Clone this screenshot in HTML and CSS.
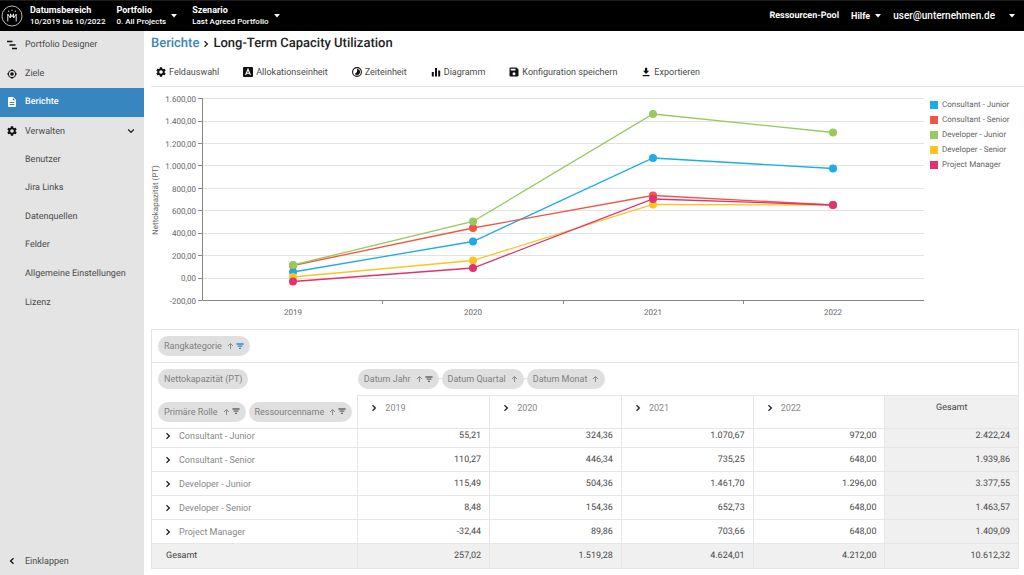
FILE: index.html
```html
<!DOCTYPE html>
<html lang="de">
<head>
<meta charset="utf-8">
<title>Long-Term Capacity Utilization</title>
<meta name="viewport" content="width=device-width, initial-scale=1">
<link rel="stylesheet" href="styles.css">
</head>
<body>
<svg class="defs" aria-hidden="true">
  <symbol id="gear" viewBox="2 2 20 20"><path d="M19.14 12.94c.04-.3.06-.61.06-.94 0-.32-.02-.64-.07-.94l2.03-1.58c.18-.14.23-.41.12-.61l-1.92-3.32c-.12-.22-.37-.29-.59-.22l-2.39.96c-.5-.38-1.03-.7-1.62-.94L14.4 2.81c-.04-.24-.24-.41-.48-.41h-3.84c-.24 0-.43.17-.47.41L9.25 5.35C8.66 5.59 8.12 5.92 7.63 6.29L5.24 5.33c-.22-.08-.47 0-.59.22L2.74 8.87c-.12.21-.08.47.12.61l2.03 1.58C4.84 11.36 4.8 11.69 4.8 12s.02.64.07.94l-2.03 1.58c-.18.14-.23.41-.12.61l1.92 3.32c.12.22.37.29.59.22l2.39-.96c.5.38 1.03.7 1.62.94l.36 2.54c.05.24.24.41.48.41h3.84c.24 0 .44-.17.47-.41l.36-2.54c.59-.24 1.13-.56 1.62-.94l2.39.96c.22.08.47 0 .59-.22l1.92-3.32c.12-.22.07-.47-.12-.61zM12 15.6a3.6 3.6 0 1 1 0-7.2 3.6 3.6 0 0 1 0 7.2z"/></symbol>
  <symbol id="chevron" viewBox="0 0 8 8"><path d="M2.5 1.2 5.4 4 2.5 6.8" fill="none" stroke="currentColor" stroke-width="1.3"/></symbol>
  <symbol id="caret" viewBox="0 0 6 4"><path d="M0 0h6L3 3.5z"/></symbol>
  <symbol id="up" viewBox="0 0 7 8"><path d="M3.5 7V1.6M1 4l2.500-2.500L6 4" fill="none" stroke="currentColor" stroke-width=".9"/></symbol>
  <symbol id="filter" viewBox="0 0 8 7"><path d="M.4 1h7.2M1.6 3.2h4.8M3 5.4h2" fill="none" stroke="currentColor" stroke-width="1.3"/></symbol>
</svg>

<header class="topbar">
  <svg class="logo" viewBox="0 0 22 22" role="img" aria-label="Logo"><circle cx="11" cy="11" r="10" fill="none" stroke="#ccc" stroke-width=".9"/><path d="M6.800 16.500V9.200l2.600 3.800V8.800l1.600 3.200 1.600-3.200V13l2.600-3.800v7.300" fill="none" stroke="#fff" stroke-width=".9"/><circle cx="7.700" cy="6.200" r=".7" fill="#bbb"/><circle cx="11" cy="5.300" r=".7" fill="#bbb"/><circle cx="14.300" cy="6.200" r=".7" fill="#bbb"/></svg>
  <button class="pick range"><span class="pick-text"><strong>Datumsbereich</strong><span>10/2019 bis 10/2022</span></span></button>
  <button class="pick"><span class="pick-text"><strong>Portfolio</strong><span>0. All Projects</span></span><svg class="caret"><use href="#caret"/></svg></button>
  <button class="pick"><span class="pick-text"><strong>Szenario</strong><span>Last Agreed Portfolio</span></span><svg class="caret"><use href="#caret"/></svg></button>
  <nav class="top-links">
    <a href="#">Ressourcen-Pool</a>
    <button>Hilfe<svg class="caret"><use href="#caret"/></svg></button>
    <button class="user">user@unternehmen.de<svg class="caret"><use href="#caret"/></svg></button>
  </nav>
</header>

<div class="layout">
  <aside class="sidebar">
    <nav class="menu">
      <a href="#"><svg class="icon" viewBox="0 0 10 10"><path d="M0 1.500h5.500M2.500 5h6M5 8.500h5" fill="none" stroke="currentColor" stroke-width="1.500"/></svg>Portfolio Designer</a>
      <a href="#"><svg class="icon" viewBox="0 0 10 10"><circle cx="5" cy="5" r="3.7" fill="none" stroke="currentColor"/><circle cx="5" cy="5" r="1.8"/><path d="M5 0v1.5M5 8.500V10M0 5h1.5M8.500 5H10" stroke="currentColor"/></svg>Ziele</a>
      <a href="#" class="active" aria-current="page"><svg class="icon" viewBox="0 0 10 10"><path fill-rule="evenodd" d="M2 0h4.200L9 2.800V9a1 1 0 0 1-1 1H2a1 1 0 0 1-1-1V1a1 1 0 0 1 1-1zM5.800.8v2.400h2.400zM2.800 5v.9h4.400V5zM2.800 7v.9h4.400V7z"/></svg>Berichte</a>
      <button><svg class="icon"><use href="#gear"/></svg>Verwalten<svg class="expand"><use href="#chevron"/></svg></button>
      <a href="#" class="sub">Benutzer</a>
      <a href="#" class="sub">Jira Links</a>
      <a href="#" class="sub">Datenquellen</a>
      <a href="#" class="sub">Felder</a>
      <a href="#" class="sub">Allgemeine Einstellungen</a>
      <a href="#" class="sub">Lizenz</a>
    </nav>
    <button class="collapse"><svg class="icon back"><use href="#chevron"/></svg>Einklappen</button>
  </aside>

  <main class="main">
    <h1 class="crumbs"><a href="#">Berichte</a><svg class="chev"><use href="#chevron"/></svg><span>Long-Term Capacity Utilization</span></h1>
    <div class="toolbar">
      <button><svg class="icon"><use href="#gear"/></svg>Feldauswahl</button>
      <button><svg class="icon" viewBox="0 0 10 10"><rect width="10" height="10" rx="1"/><path d="M2.600 8 5 2.200 7.400 8M3.500 6.200h3" fill="none" stroke="#fff" stroke-width="1.100"/></svg>Allokationseinheit</button>
      <button><svg class="icon" viewBox="0 0 10 10"><circle cx="5" cy="5" r="4.400" fill="none" stroke="currentColor" stroke-width="1.100"/><path d="M5 2a3 3 0 1 1-2.200 5L5 5z"/></svg>Zeiteinheit</button>
      <button><svg class="icon" viewBox="0 0 10 10"><path d="M.8 5h2v4.500h-2zM4 1h2v8.500H4zM7.200 3.500h2v6h-2z"/></svg>Diagramm</button>
      <button><svg class="icon" viewBox="0 0 10 10"><path fill-rule="evenodd" d="M1.500.5h6l2 2v6a1 1 0 0 1-1 1h-7a1 1 0 0 1-1-1v-7a1 1 0 0 1 1-1zM1.700 1.700v1.900h4.800V1.700zM5 5.200a1.500 1.500 0 1 0 0 3 1.500 1.500 0 0 0 0-3z"/></svg>Konfiguration speichern</button>
      <button><svg class="icon" viewBox="0 0 10 10"><path d="M4 .8h2.200v3h2L5.100 7 2 3.800h2zM1.700 8h6.800v1.300H1.700z"/></svg>Exportieren</button>
    </div>

    <section class="chart">
      <svg class="plot" viewBox="151 87 776 238" role="img" aria-label="Nettokapazität (PT) nach Jahr">
        <path class="grid" d="M203 98.500H924M203 121.500H924M203 143.500H924M203 165.500H924M203 188.500H924M203 210.500H924M203 233.500H924M203 255.500H924M203 278.500H924"/>
        <path class="axis" d="M202.500 98V300.500H924M198 98.500h4M198 121.500h4M198 143.500h4M198 165.500h4M198 188.500h4M198 210.500h4M198 233.500h4M198 255.500h4M198 278.500h4M198 300.500h4M382.500 300v4M563.500 300v4M743.500 300v4"/>
        <g class="y-labels">
          <text x="196" y="102">1.600,00</text><text x="196" y="124">1.400,00</text><text x="196" y="147">1.200,00</text><text x="196" y="169">1.000,00</text><text x="196" y="192">800,00</text><text x="196" y="214">600,00</text><text x="196" y="236">400,00</text><text x="196" y="259">200,00</text><text x="196" y="281">0,00</text><text x="196" y="304">-200,00</text>
        </g>
        <g class="x-labels">
          <text x="293" y="315">2019</text><text x="473" y="315">2020</text><text x="653" y="315">2021</text><text x="833" y="315">2022</text>
          <text transform="translate(158 200) rotate(-90)">Nettokapazität (PT)</text>
        </g>
        <g class="series blue"><polyline points="293,272 473,241.500 653,158 833,168.500"/><circle cx="293" cy="272" r="4"/><circle cx="473" cy="241.500" r="4"/><circle cx="653" cy="158" r="4"/><circle cx="833" cy="168.500" r="4"/></g>
        <g class="series red"><polyline points="293,265.500 473,228 653,195.500 833,205"/><circle cx="293" cy="265.500" r="4"/><circle cx="473" cy="228" r="4"/><circle cx="653" cy="195.500" r="4"/><circle cx="833" cy="205" r="4"/></g>
        <g class="series green"><polyline points="293,265 473,221.500 653,114 833,132.500"/><circle cx="293" cy="265" r="4"/><circle cx="473" cy="221.500" r="4"/><circle cx="653" cy="114" r="4"/><circle cx="833" cy="132.500" r="4"/></g>
        <g class="series yellow"><polyline points="293,277 473,260.500 653,204.500 833,205"/><circle cx="293" cy="277" r="4"/><circle cx="473" cy="260.500" r="4"/><circle cx="653" cy="204.500" r="4"/><circle cx="833" cy="205" r="4"/></g>
        <g class="series pink"><polyline points="293,281.500 473,268 653,199 833,205"/><circle cx="293" cy="281.500" r="4"/><circle cx="473" cy="268" r="4"/><circle cx="653" cy="199" r="4"/><circle cx="833" cy="205" r="4"/></g>
      </svg>
      <ul class="legend">
        <li class="blue">Consultant - Junior</li>
        <li class="red">Consultant - Senior</li>
        <li class="green">Developer - Junior</li>
        <li class="yellow">Developer - Senior</li>
        <li class="pink">Project Manager</li>
      </ul>
    </section>

    <table class="pivot">
      <colgroup><col class="c-name"><col class="c-year"><col class="c-year"><col class="c-year"><col class="c-year"><col></colgroup>
      <thead>
        <tr class="fields"><td colspan="6"><div class="pills"><button class="pill">Rangkategorie<svg class="up"><use href="#up"/></svg><svg class="filter on"><use href="#filter"/></svg></button></div></td></tr>
        <tr class="fields">
          <td class="open"><div class="pills"><button class="pill">Nettokapazität (PT)</button></div></td>
          <td class="dates" colspan="5"><div class="pills linked"><button class="pill">Datum Jahr<svg class="up"><use href="#up"/></svg><svg class="filter"><use href="#filter"/></svg></button><button class="pill">Datum Quartal<svg class="up"><use href="#up"/></svg></button><button class="pill">Datum Monat<svg class="up"><use href="#up"/></svg></button></div></td>
        </tr>
        <tr class="fields years">
          <td><div class="pills"><button class="pill">Primäre Rolle<svg class="up"><use href="#up"/></svg><svg class="filter"><use href="#filter"/></svg></button><button class="pill">Ressourcenname<svg class="up"><use href="#up"/></svg><svg class="filter"><use href="#filter"/></svg></button></div></td>
          <th scope="col"><button><svg class="chev"><use href="#chevron"/></svg>2019</button></th>
          <th scope="col"><button><svg class="chev"><use href="#chevron"/></svg>2020</button></th>
          <th scope="col"><button><svg class="chev"><use href="#chevron"/></svg>2021</button></th>
          <th scope="col"><button><svg class="chev"><use href="#chevron"/></svg>2022</button></th>
          <th scope="col" class="total">Gesamt</th>
        </tr>
      </thead>
      <tbody>
        <tr class="first"><th scope="row"><button><svg class="chev"><use href="#chevron"/></svg>Consultant - Junior</button></th><td>55,21</td><td>324,36</td><td>1.070,67</td><td>972,00</td><td class="total">2.422,24</td></tr>
        <tr><th scope="row"><button><svg class="chev"><use href="#chevron"/></svg>Consultant - Senior</button></th><td>110,27</td><td>446,34</td><td>735,25</td><td>648,00</td><td class="total">1.939,86</td></tr>
        <tr><th scope="row"><button><svg class="chev"><use href="#chevron"/></svg>Developer - Junior</button></th><td>115,49</td><td>504,36</td><td>1.461,70</td><td>1.296,00</td><td class="total">3.377,55</td></tr>
        <tr><th scope="row"><button><svg class="chev"><use href="#chevron"/></svg>Developer - Senior</button></th><td>8,48</td><td>154,36</td><td>652,73</td><td>648,00</td><td class="total">1.463,57</td></tr>
        <tr><th scope="row"><button><svg class="chev"><use href="#chevron"/></svg>Project Manager</button></th><td>-32,44</td><td>89,86</td><td>703,66</td><td>648,00</td><td class="total">1.409,09</td></tr>
      </tbody>
      <tfoot>
        <tr><th scope="row">Gesamt</th><td>257,02</td><td>1.519,28</td><td>4.624,01</td><td>4.212,00</td><td>10.612,32</td></tr>
      </tfoot>
    </table>
  </main>
</div>
</body>
</html>
```

FILE: styles.css
```css
* { box-sizing: border-box; }
body { margin: 0; min-height: 100vh; display: flex; flex-direction: column; background: #fff; color: #4a4a4a; font: 9px/12px Roboto, sans-serif; text-rendering: geometricPrecision; }
button { margin: 0; padding: 0; border: 0; background: none; color: inherit; font: inherit; text-align: left; cursor: pointer; }
a { color: inherit; text-decoration: none; }
svg { fill: currentColor; flex: none; }
.defs { position: absolute; width: 0; height: 0; }
.icon { width: 10px; height: 10px; color: #111; }
.chev { width: 8px; height: 8px; color: #222; }
.caret { width: 6px; height: 4px; }

.topbar { display: flex; align-items: center; height: 31px; padding: 0 9px 1px 1px; background: #000; color: #fff; border-top: 1px solid #1c1c1c; }
.logo { width: 22px; height: 22px; }
.pick { display: flex; align-items: center; gap: 5px; margin-right: 15px; font-size: 8px; font-weight: 500; }
.pick-text { display: flex; flex-direction: column; }
.range { margin-left: 7px; margin-right: 11px; }
.topbar strong { font-size: 9px; font-weight: 700; }
.top-links { display: flex; align-items: center; gap: 12px; margin-left: auto; font-weight: 700; }
.top-links button { display: flex; align-items: center; gap: 5px; }
.top-links .user { gap: 14px; font-size: 10px; font-weight: 500; }

.layout { flex: 1; display: flex; }
.sidebar { flex: none; width: 144px; display: flex; flex-direction: column; justify-content: space-between; background: #e4e4e4; }
.menu { display: grid; grid-auto-rows: 1fr; min-height: 286px; }
.menu > *, .collapse { display: flex; align-items: center; gap: 8px; padding: 0 9px 0 7px; }
.menu .sub { padding-left: 25px; }
.menu .active { background: #3886c0; color: #fff; font-weight: 500; }
.active .icon { color: #fff; }
.expand { width: 8px; height: 8px; margin-left: auto; color: #222; transform: rotate(90deg); }
.collapse { height: 28px; }
.back { width: 10px; height: 8px; transform: rotate(180deg); }

.main { flex: 1; min-width: 0; padding: 0 5px 5px 7px; }
.crumbs { display: flex; align-items: center; gap: 3px; height: 26px; margin: 0; font-size: 13px; line-height: 16px; font-weight: 500; color: #222; }
.crumbs a { color: #3886c0; }
.toolbar { display: flex; align-items: center; gap: 24px; height: 30px; margin-right: -5px; padding-left: 5px; border-bottom: 1px solid #e6e6e6; }
.toolbar button { display: flex; align-items: center; gap: 3px; white-space: nowrap; }

.chart { display: flex; align-items: flex-start; gap: 3px; padding-bottom: 4px; }
.plot { flex: 1; min-width: 0; }
.grid { fill: none; stroke: #e2e2e2; }
.axis { fill: none; stroke: #888; }
.plot text { font-size: 8px; fill: #666; }
.y-labels { text-anchor: end; }
.x-labels { text-anchor: middle; }
.series { color: var(--hue); fill: var(--hue); }
.series polyline { fill: none; stroke: var(--hue); stroke-width: 1.3; }
.blue { --hue: #1eabe8; }
.red { --hue: #f05545; }
.green { --hue: #97c95c; }
.yellow { --hue: #fdc325; }
.pink { --hue: #e2316f; }
.legend { flex: none; width: 89px; margin: 0; padding: 10px 0 0; list-style: none; font-size: 8px; line-height: 15px; color: #666; white-space: nowrap; }
.legend li { display: flex; align-items: center; gap: 4px; }
.legend li::before { content: ""; width: 8px; height: 8px; background: var(--hue); }

.pivot { width: 100%; table-layout: fixed; border-collapse: collapse; border: 1px solid #e6e6e6; }
.c-name { width: 23.8%; }
.c-year { width: 15.2%; }
.pivot td, .pivot th { height: 24px; padding: 0 8px; border: 1px solid #e6e6e6; font-weight: 400; text-align: right; }
.pivot th { text-align: left; color: #888; }
.pivot th button { display: flex; align-items: center; gap: 7px; padding-left: 4px; }
.pivot .fields td { height: 33px; padding: 0 6px; }
.pivot .fields .open { border-bottom: 0; border-right: 0; }
.pivot .fields .dates { padding: 0; border-left: 0; }
.pivot .years td { border-top: 0; }
.pivot .years th { vertical-align: top; padding-top: 6px; }
.pivot .first td, .pivot .first th { height: 19px; padding-bottom: 5px; }
.pivot .total, .pivot tfoot { background: #f0f0f0; }
.pivot .years .total { text-align: center; color: #444; }
.pivot tfoot td, .pivot tfoot th { height: 25px; }
.pivot tfoot th { color: #444; padding-left: 14px; }
.pills { display: flex; gap: 3px; }
.pill { position: relative; display: flex; align-items: center; height: 20px; padding: 0 6px; border-radius: 10px; background: #dfdfdf; color: #808080; white-space: nowrap; }
.linked .pill + .pill::before { content: ""; position: absolute; left: -3px; top: 9px; width: 3px; height: 1px; background: #dfdfdf; }
.up { width: 7px; height: 8px; margin-left: 5px; }
.filter { width: 8px; height: 7px; margin-left: 2px; color: #666; }
.filter.on { color: #3886c0; }
```
